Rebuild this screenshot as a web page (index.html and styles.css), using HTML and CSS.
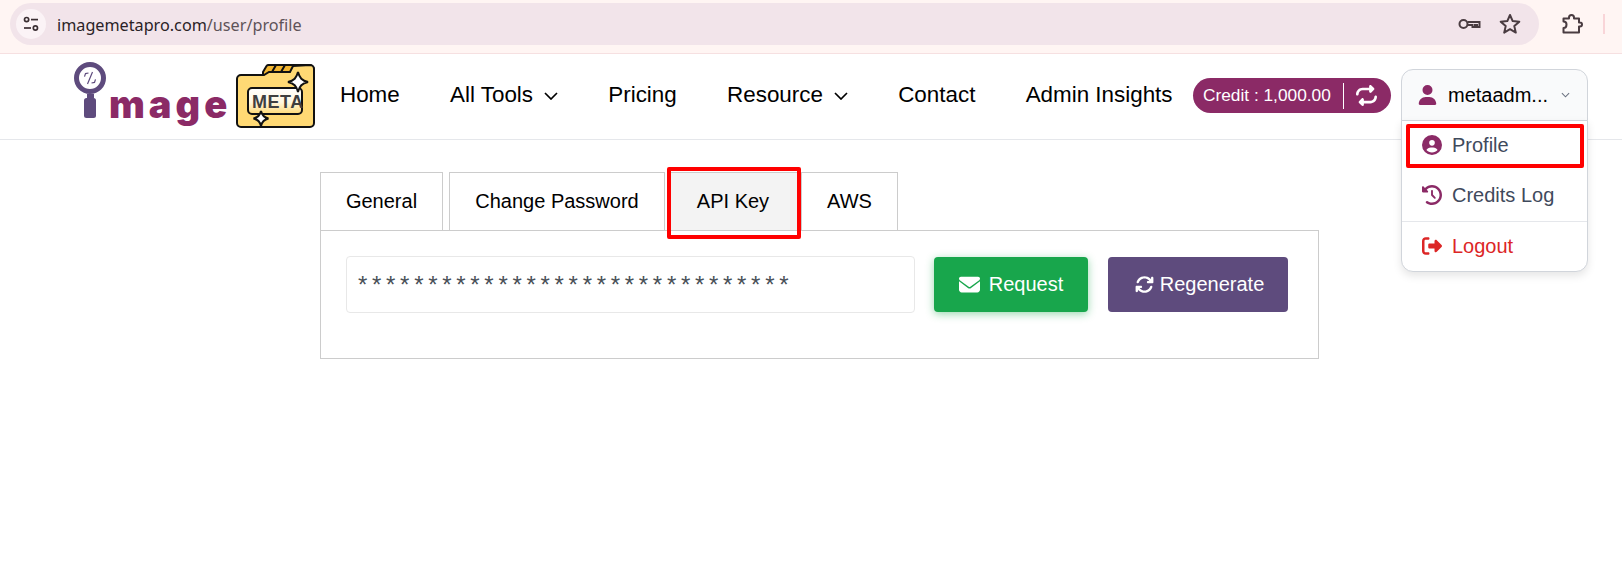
FILE: index.html
```html
<!DOCTYPE html>
<html lang="en">
<head>
<meta charset="utf-8">
<title>Profile</title>
<link rel="stylesheet" href="styles.css">
</head>
<body>
<div class="browser-bar">
  <div class="omnibox">
    <span class="tune">
      <svg viewBox="0 0 18 18" width="18" height="18" fill="none" stroke="#3b2f33" stroke-width="1.7"><circle cx="4.6" cy="4.6" r="2.1"/><path d="M9 4.6h7"/><path d="M2 13h7"/><circle cx="13.4" cy="13" r="2.1"/></svg>
    </span>
    <span class="url">imagemetapro.com<span class="url-path">/user/profile</span></span>
    <span class="omni-icons">
      <svg viewBox="0 0 24 24" width="24" height="24" fill="none" stroke="#4a3c41" stroke-width="2"><circle cx="6.5" cy="12" r="4"/><path d="M10.500 10h12v5h-2.500v-2h-2v2h-2.500v-2h-5"/></svg>
      <svg viewBox="0 0 24 24" width="24" height="24" fill="none" stroke="#4a3c41" stroke-width="2" stroke-linejoin="round"><path d="M12 3l2.700 6.100 6.600.6-5 4.400 1.500 6.500L12 17.200l-5.800 3.400 1.500-6.500-5-4.400 6.600-.6z"/></svg>
    </span>
  </div>
  <svg class="puzzle" viewBox="0 0 21 20" width="21" height="20" fill="none" stroke="#4a3c41" stroke-width="2" stroke-linejoin="round"><path d="M1.500 4.500H7V3.500a2.500 2.500 0 0 1 5 0V4.500H17V8.500h1a2 2 0 0 1 0 4h-1V18.500H1.500V14c2 0 3-1.500 3-3.500s-1-3-3-3z"/></svg>
  <span class="bar-sep"></span>
</div>

<header class="navbar">
  <a class="logo" href="#">
    <svg viewBox="74 60 242 70" width="242" height="70">
      <defs>
        <linearGradient id="labelFill" x1="0" y1="0" x2="0" y2="1"><stop offset="0" stop-color="#ffffff"/><stop offset="0.55" stop-color="#fff7df"/><stop offset="1" stop-color="#ffd974"/></linearGradient>
      </defs>
      <circle cx="90" cy="77" r="13.500" fill="#fff" stroke="#5e4b7d" stroke-width="5"/>
      <path d="M88.500 72l-3 .6-1 3M91.500 82l3-.6 1-3M92.500 71l-5 12" fill="none" stroke="#5e4b7d" stroke-width="1.200"/>
      <rect x="87" y="93" width="7" height="4" fill="#5e4b7d"/>
      <rect x="84" y="97" width="12" height="20" rx="2.500" fill="#5e4b7d"/>
      <text class="logo-word" x="109" y="117">mage</text>
      <path d="M263 71l3.500-6a2.500 2.500 0 0 1 2-1H309a5 5 0 0 1 5 5v5H263z" fill="#f2b632" stroke="#111" stroke-width="2"/>
      <path d="M272 71l4-7M281 71l4-7" stroke="#111" stroke-width="2"/>
      <path d="M241 74h23l5-3h21l3-6 17-1a4 4 0 0 1 4 4v54a4 4 0 0 1-4 4H241a4 4 0 0 1-4-4V78a4 4 0 0 1 4-4z" fill="#ffd974" stroke="#111" stroke-width="2"/>
      <rect x="248" y="87" width="54" height="26" rx="4" fill="url(#labelFill)" stroke="#111" stroke-width="2"/>
      <path d="M298 71c1.500 6 4 8.500 10 10-6 1.500-8.500 4-10 10-1.500-6-4-8.500-10-10 6-1.500 8.500-4 10-10z" fill="#fff" stroke="#111" stroke-width="2"/>
      <text class="logo-meta" x="252" y="107">META</text>
      <path d="M261 110c1 4.500 3 6.500 7.500 7.500-4.500 1-6.500 3-7.500 7.500-1-4.500-3-6.500-7.500-7.500 4.500-1 6.500-3 7.500-7.500z" fill="#fff" stroke="#111" stroke-width="2"/>
    </svg>
  </a>
  <nav class="nav-links">
    <a href="#">Home</a>
    <a href="#">All Tools <svg class="chev" viewBox="0 0 14 8" width="14" height="8"><path d="M1 1l6 6 6-6" fill="none" stroke="#000" stroke-width="1.700"/></svg></a>
    <a href="#">Pricing</a>
    <a href="#">Resource <svg class="chev" viewBox="0 0 14 8" width="14" height="8"><path d="M1 1l6 6 6-6" fill="none" stroke="#000" stroke-width="1.700"/></svg></a>
    <a href="#">Contact</a>
    <a href="#">Admin Insights</a>
  </nav>
  <div class="nav-right">
    <div class="credit">
      <span class="credit-text">Credit : 1,000.00</span>
      <span class="credit-sep"></span>
      <svg viewBox="0 0 512 512" width="21" height="21" fill="#fff"><path d="M0 224c0 17.700 14.300 32 32 32s32-14.300 32-32c0-53 43-96 96-96H320v32c0 12.900 7.800 24.600 19.800 29.600s25.700 2.200 34.900-6.900l64-64c12.500-12.500 12.500-32.800 0-45.300l-64-64c-9.200-9.200-22.900-11.900-34.900-6.900S320 19.100 320 32V64H160C71.600 64 0 135.600 0 224zm512 64c0-17.700-14.300-32-32-32s-32 14.300-32 32c0 53-43 96-96 96H192V352c0-12.900-7.800-24.600-19.800-29.600s-25.700-2.200-34.900 6.900l-64 64c-12.500 12.500-12.500 32.800 0 45.300l64 64c9.200 9.200 22.900 11.900 34.900 6.900s19.800-16.600 19.800-29.600V448H352c88.400 0 160-71.600 160-160z"/></svg>
    </div>
    <div class="user-menu">
      <button class="user-button">
        <svg viewBox="0 0 448 512" width="19" height="20" fill="#8b2a66"><path d="M224 256A128 128 0 1 0 224 0a128 128 0 1 0 0 256zm-45.700 48C79.800 304 0 383.800 0 482.300C0 498.700 13.300 512 29.700 512H418.300c16.400 0 29.700-13.300 29.700-29.700C448 383.800 368.200 304 269.700 304H178.300z"/></svg>
        <span class="user-name">metaadm...</span>
        <svg class="user-chev" viewBox="0 0 10 6" width="9" height="6"><path d="M1 1l4 4 4-4" fill="none" stroke="#6b7280" stroke-width="1.200"/></svg>
      </button>
      <div class="menu">
        <a class="menu-item menu-item-marked" href="#">
          <svg viewBox="0 0 512 512" width="20" height="20" fill="#8b2a66"><path d="M399 384.200C376.900 345.800 335.400 320 288 320H224c-47.400 0-88.900 25.800-111 64.200c35.200 39.200 86.200 63.800 143 63.800s107.800-24.700 143-63.800zM0 256a256 256 0 1 1 512 0A256 256 0 1 1 0 256zm256 16a72 72 0 1 0 0-144 72 72 0 1 0 0 144z"/></svg>
          Profile
        </a>
        <a class="menu-item menu-item-log" href="#">
          <svg viewBox="0 0 512 512" width="20" height="20" fill="#8b2a66"><path d="M75 75L41 41C25.900 25.900 0 36.600 0 57.900V168c0 13.300 10.700 24 24 24H134.100c21.400 0 32.100-25.900 17-41l-30.800-30.800C155 85.500 203 64 256 64c106 0 192 86 192 192s-86 192-192 192c-40.800 0-78.600-12.700-109.700-34.400c-14.500-10.100-34.400-6.600-44.600 7.900s-6.600 34.400 7.900 44.600C151.200 495 201.700 512 256 512c141.400 0 256-114.600 256-256S397.400 0 256 0C185.300 0 121.300 28.700 75 75zm181 53c-13.300 0-24 10.700-24 24V256c0 6.400 2.500 12.500 7 17l72 72c9.400 9.400 24.600 9.400 33.900 0s9.400-24.600 0-33.900l-65-65V152c0-13.300-10.700-24-24-24z"/></svg>
          Credits Log
        </a>
        <a class="menu-item menu-item-logout" href="#">
          <svg viewBox="0 0 512 512" width="20" height="20" fill="#dc2626"><path d="M377.900 105.900L500.700 228.700c7.200 7.200 11.300 17.100 11.300 27.300s-4.100 20.100-11.300 27.300L377.900 406.100c-6.400 6.400-15 9.900-24 9.900c-18.700 0-33.900-15.200-33.900-33.900l0-62.100-128 0c-17.700 0-32-14.300-32-32l0-64c0-17.700 14.300-32 32-32l128 0 0-62.100c0-18.700 15.200-33.900 33.900-33.900c9 0 17.600 3.600 24 9.900zM160 96L96 96c-17.700 0-32 14.300-32 32l0 256c0 17.700 14.300 32 32 32l64 0c17.700 0 32 14.300 32 32s-14.300 32-32 32l-64 0c-53 0-96-43-96-96L0 128C0 75 43 32 96 32l64 0c17.700 0 32 14.300 32 32s-14.300 32-32 32z"/></svg>
          Logout
        </a>
      </div>
    </div>
  </div>
</header>

<main class="content">
  <div class="tabs">
    <a class="tab tab-general" href="#">General</a>
    <a class="tab tab-password" href="#">Change Password</a>
    <a class="tab tab-api" href="#">API Key</a>
    <a class="tab tab-aws" href="#">AWS</a>
  </div>
  <section class="panel">
    <div class="key-field">*******************************</div>
    <button class="btn btn-request">
      <svg viewBox="0 0 512 512" width="21" height="21" fill="#fff"><path d="M48 64C21.500 64 0 85.500 0 112c0 15.100 7.100 29.300 19.200 38.400L236.800 313.600c11.400 8.500 27 8.500 38.400 0L492.800 150.400c12.100-9.100 19.200-23.300 19.200-38.400c0-26.500-21.500-48-48-48H48zM0 176V384c0 35.300 28.700 64 64 64H448c35.300 0 64-28.700 64-64V176L294.400 339.200c-22.800 17.100-54 17.100-76.800 0L0 176z"/></svg>
      Request
    </button>
    <button class="btn btn-regenerate">
      <svg viewBox="0 0 512 512" width="19" height="19" fill="#fff"><path d="M105.100 202.600c7.700-21.800 20.200-42.300 37.800-59.800c62.500-62.500 163.800-62.500 226.300 0L386.300 160H352c-17.700 0-32 14.300-32 32s14.300 32 32 32H463.500c0 0 0 0 0 0h.4c17.700 0 32-14.300 32-32V80c0-17.700-14.300-32-32-32s-32 14.300-32 32v35.200L414.400 97.600c-87.500-87.500-229.300-87.500-316.800 0C73.200 122 55.600 150.700 44.800 181.400c-5.900 16.700 2.900 34.900 19.500 40.800s34.900-2.900 40.800-19.500zM39 289.300c-5 1.500-9.800 4.200-13.700 8.200c-4 4-6.700 8.800-8.100 14c-.3 1.200-.6 2.500-.8 3.800c-.3 1.700-.4 3.400-.4 5.100V432c0 17.700 14.300 32 32 32s32-14.300 32-32V396.900l17.600 17.500 0 0c87.500 87.400 229.300 87.400 316.700 0c24.400-24.400 42.100-53.100 52.900-83.700c5.900-16.700-2.900-34.900-19.500-40.800s-34.900 2.900-40.800 19.500c-7.700 21.800-20.200 42.300-37.800 59.800c-62.500 62.500-163.800 62.500-226.300 0l-.1-.1L125.600 352H160c17.700 0 32-14.300 32-32s-14.300-32-32-32H48.400c-1.600 0-3.200 .1-4.800 .3s-3.100 .5-4.600 1z"/></svg>
      Regenerate
    </button>
  </section>
</main>
</body>
</html>
```
FILE: styles.css
```css
* { box-sizing: border-box; }
html, body { margin: 0; padding: 0; background: #fff; }
body { font-family: "Liberation Sans", Arial, sans-serif; color: #000; height: 585px; overflow: hidden; }
a { color: inherit; text-decoration: none; }

/* browser chrome */
.browser-bar { height: 54px; display: flex; align-items: flex-start; background: #fff5f3; border-bottom: 1px solid #f6e0e1; padding: 3px 0 0 10px; }
.omnibox { width: 1529px; height: 42px; border-radius: 21px; background: #f2e4ea; display: flex; align-items: center; padding: 0 17px 0 6px; }
.tune { width: 30px; height: 30px; border-radius: 50%; background: #fbf3f6; display: flex; align-items: center; justify-content: center; }
.url { font-family: "Noto Sans", sans-serif; font-size: 16.200px; color: #2a2226; margin-left: 11px; padding-top: 2px; }
.url-path { color: #5e5358; }
.omni-icons { margin-left: auto; display: flex; align-items: center; gap: 17px; }
.puzzle { margin: 11px 0 0 23px; }
.bar-sep { width: 2px; height: 20px; margin: 11px 0 0 20px; background: #f9d5d8; }

/* navbar */
.navbar { height: 86px; display: flex; align-items: center; padding: 0 34px 0 74px; border-bottom: 1px solid #e5e7eb; }
.logo { display: block; width: 242px; height: 70px; margin-top: -2px; }
.logo svg { display: block; }
.logo-word { font-family: Inter, sans-serif; font-weight: 900; font-size: 38px; letter-spacing: 4px; fill: #8b2a66; }
.logo-meta { font-family: "Liberation Sans", sans-serif; font-weight: 700; font-size: 18px; letter-spacing: .5px; fill: #3f3f3f; }
.nav-links { display: flex; align-items: center; gap: 50.300px; margin: -4px 0 0 24px; font-size: 22.400px; white-space: nowrap; }
.nav-links a { display: flex; align-items: center; gap: 11px; }
.chev { margin-top: 3px; }
.nav-right { margin: -4px 0 0 auto; display: flex; align-items: flex-start; gap: 10px; }

.credit { width: 198px; height: 35px; margin-top: 9px; border-radius: 18px; background: #8b2a66; color: #fff; display: flex; align-items: center; padding-left: 10px; font-size: 17.300px; white-space: nowrap; }
.credit-sep { width: 1px; height: 26px; margin: 0 12px; background: #fff; }

/* user dropdown */
.user-menu { position: relative; width: 187px; height: 51px; }
.user-button { width: 100%; height: 52px; display: flex; align-items: center; padding: 0 17px 0 16px; background: #f9fafb; border: 1px solid #d1d5db; border-radius: 12px 12px 0 0; font: inherit; font-size: 20px; color: #000; }
.user-name { margin-left: 11px; }
.user-chev { margin-left: auto; }
.menu { position: absolute; z-index: 5; top: 51px; left: 0; right: 0; height: 152px; background: #fff; border: 1px solid #d1d5db; border-radius: 0 0 12px 12px; box-shadow: 0 4px 8px rgba(0,0,0,.1); padding-top: 3px; }
.menu-item { display: flex; align-items: center; gap: 10px; height: 53px; padding: 1px 0 0 20px; font-size: 20px; color: #3f4a5c; }
.menu-item-marked { height: 44px; margin: 0 3px 0 4px; padding: 0 0 2px 12px; border: 4px solid #f00; border-radius: 2px; }
.menu-item-logout { color: #dc2626; height: 49px; padding-top: 0; border-top: 1px solid #e5e7eb; }

/* tabs */
.content { width: 999px; margin: 32px 0 0 320px; }
.tabs { display: flex; align-items: flex-end; height: 58px; }
.tab { height: 58px; display: flex; align-items: center; justify-content: center; background: #fff; border: 1px solid #ccc; border-bottom: 0; font-size: 20px; white-space: nowrap; }
.tab-general { width: 123px; }
.tab-password { width: 216px; margin-left: 6px; }
.tab-api { position: relative; width: 130px; margin-left: 4px; padding-right: 2px; background: #f3f3f3; }
.tab-api::after { content: ""; position: absolute; left: -3px; right: -3px; top: -6px; bottom: -9px; border: 4px solid #f00; border-radius: 2px; }
.tab-aws { width: 97px; margin-left: 2px; }

.panel { height: 129px; border: 1px solid #ccc; display: flex; align-items: flex-start; padding: 25px 0 0 25px; }
.key-field { width: 569px; height: 57px; border: 1px solid #e8e8e8; border-radius: 4px; padding: 0 0 0 11px; font-size: 24px; line-height: 55px; letter-spacing: 4.700px; color: #495057; overflow: hidden; white-space: nowrap; }
.btn { height: 55px; margin-top: 1px; display: flex; align-items: center; justify-content: center; border: 0; border-radius: 4px; font: inherit; font-size: 20px; color: #fff; }
.btn-request { width: 154px; margin-left: 19px; gap: 9px; background: #18a64c; box-shadow: 0 2px 8px rgba(24,166,76,.45); }
.btn-regenerate { width: 180px; margin-left: 20px; padding-left: 9px; gap: 6px; background: #5e4b7d; }
```
